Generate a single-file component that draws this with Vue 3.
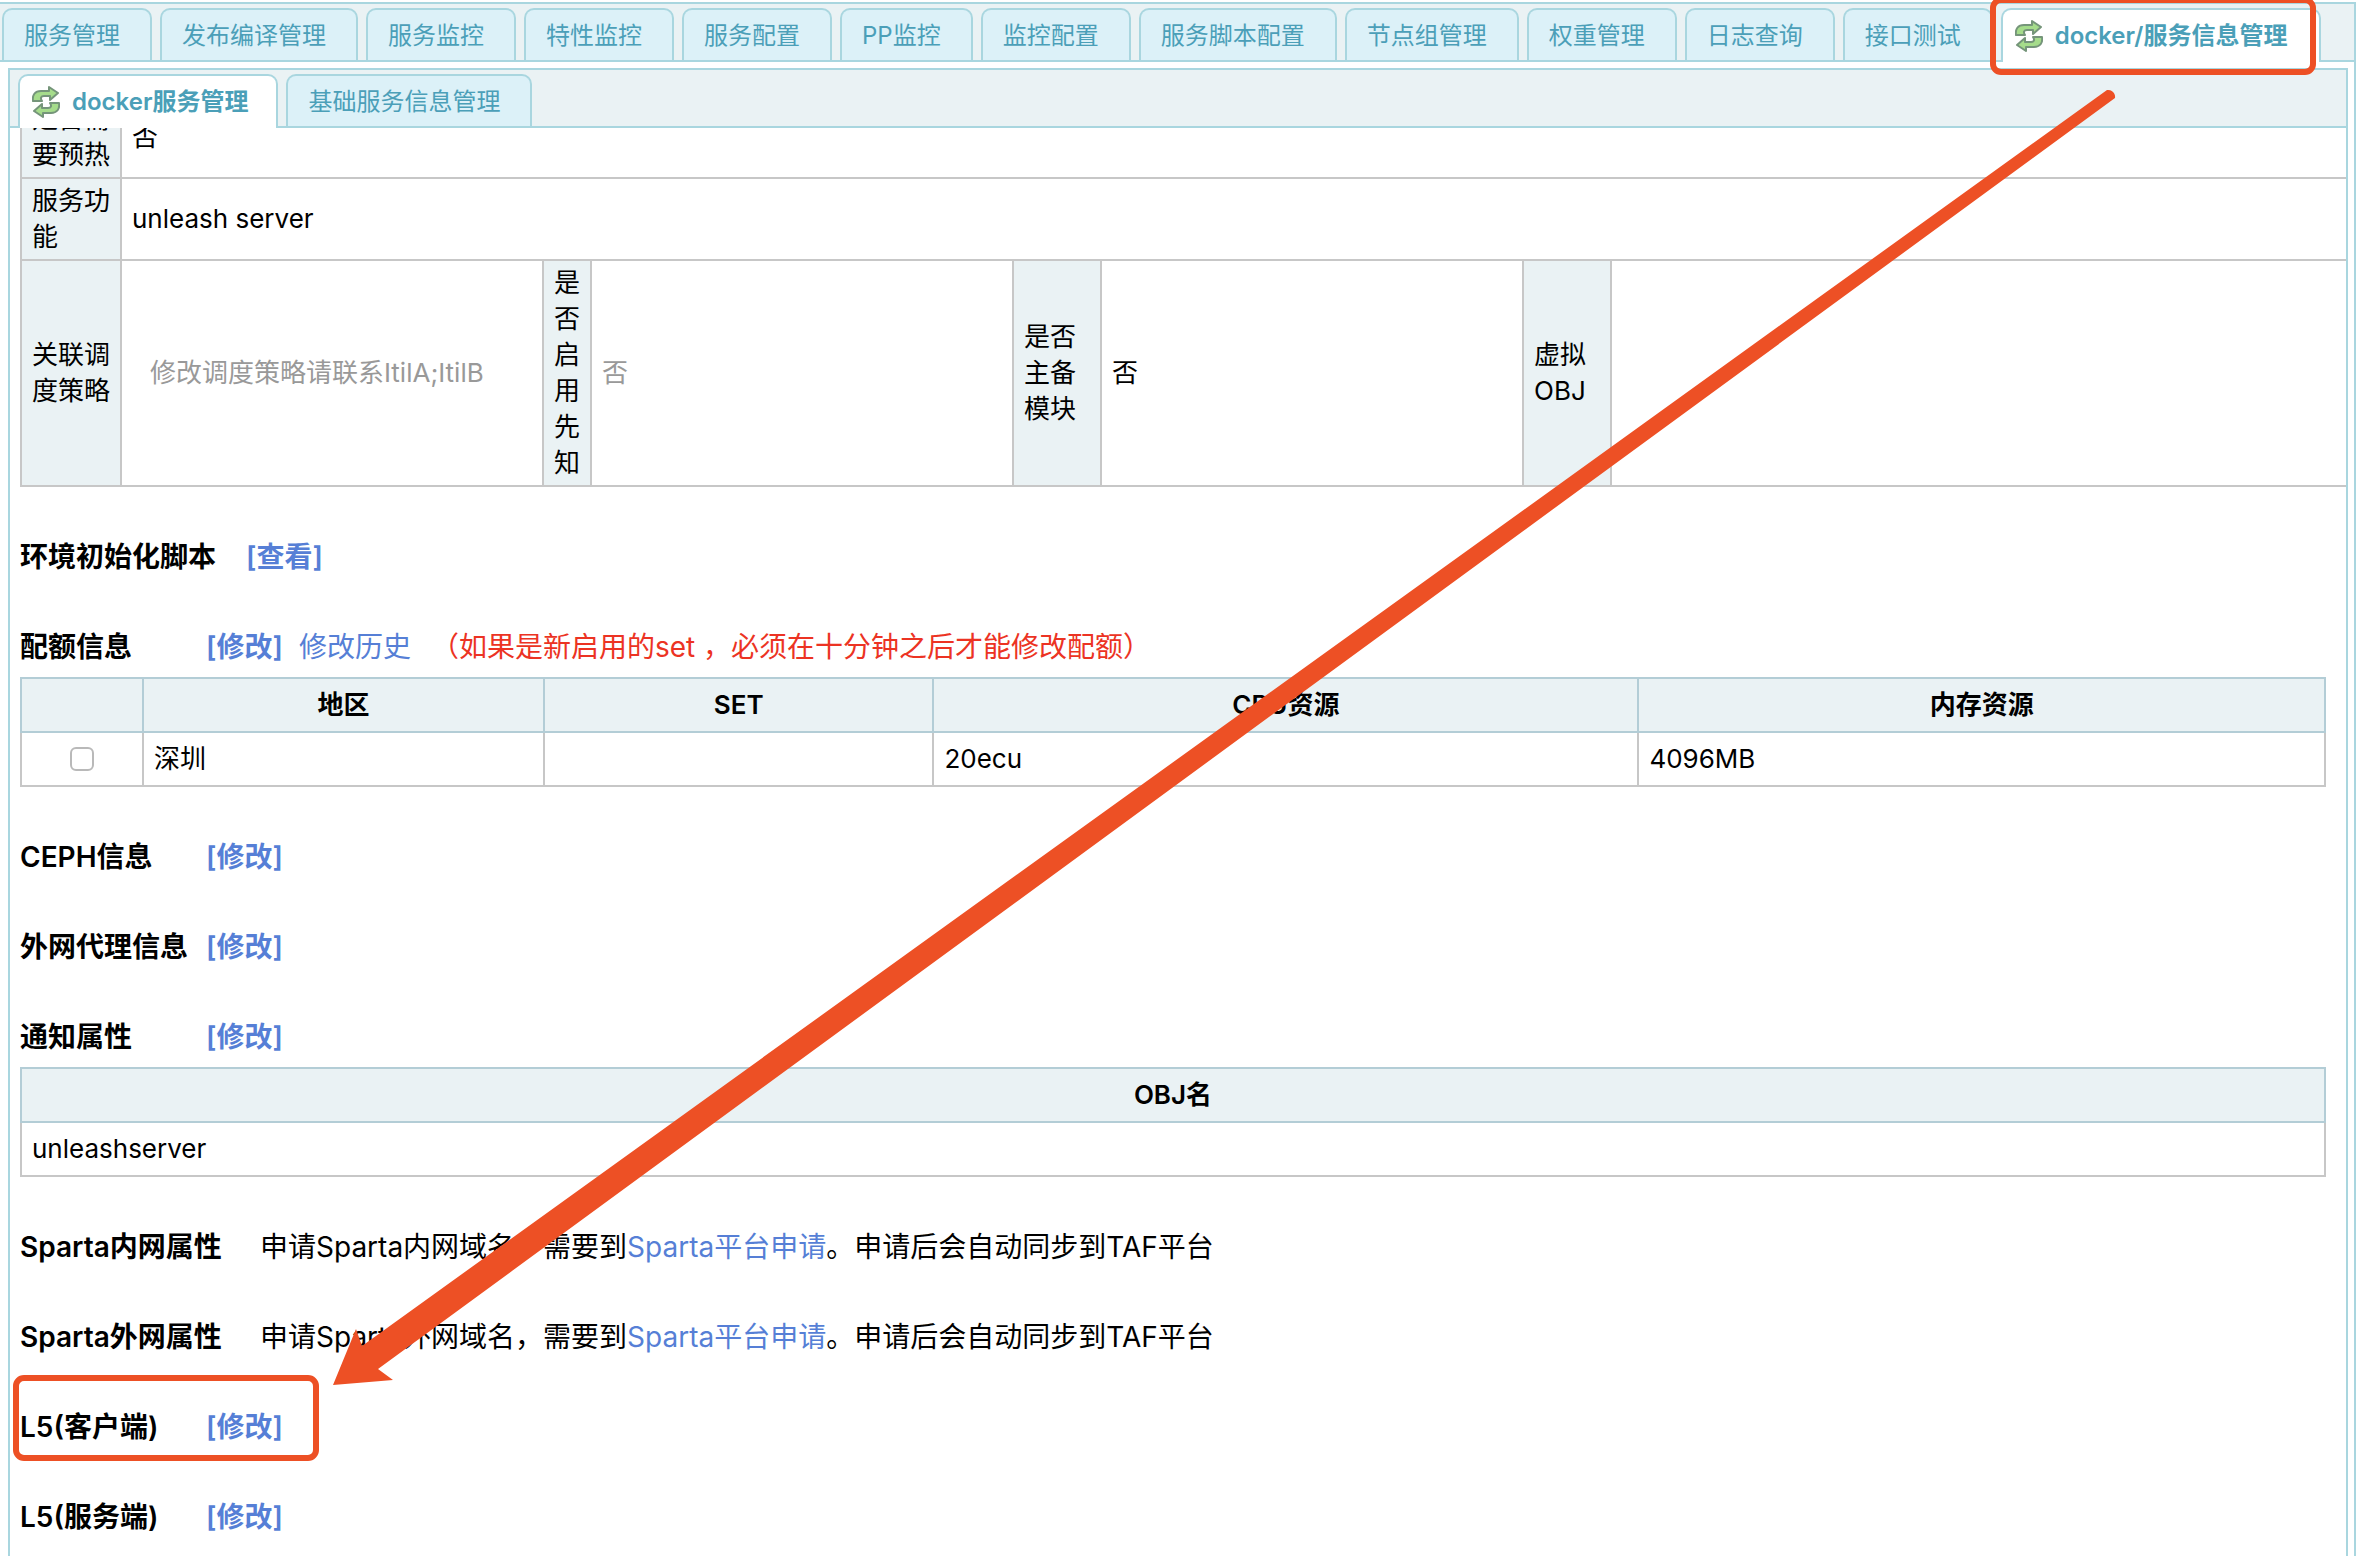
<script setup>
import { ref } from 'vue'

const mainTabs = [
  '服务管理', '发布编译管理', '服务监控', '特性监控', '服务配置', 'PP监控', '监控配置',
  '服务脚本配置', '节点组管理', '权重管理', '日志查询', '接口测试', 'docker/服务信息管理',
]
const subTabs = ['docker服务管理', '基础服务信息管理']
const activeMain = ref(12)
const activeSub = ref(0)
const quotaChecked = ref(false)
</script>

<template>
  <div class="page">
    <div class="shell">
      <nav class="bar" role="tablist">
        <button
          v-for="(name, i) in mainTabs"
          :key="name"
          type="button"
          role="tab"
          class="tab"
          :class="{ active: i === activeMain }"
          :aria-selected="i === activeMain"
          @click="activeMain = i"
        >
          <svg v-if="i === activeMain" class="refresh" viewBox="0 0 28 32" aria-hidden="true">
            <g v-for="turn in [0, 180]" :key="turn" :transform="`rotate(${turn} 14 16)`">
              <path d="M1 15C0 9 3 5 9 5H17V1L26 7L18 14V10H12C9 10 8 12 10 15Z" />
            </g>
          </svg>
          <span>{{ name }}</span>
        </button>
      </nav>

      <div class="body">
        <div class="panel">
          <nav class="bar sub" role="tablist">
            <button
              v-for="(name, i) in subTabs"
              :key="name"
              type="button"
              role="tab"
              class="tab"
              :class="{ active: i === activeSub }"
              :aria-selected="i === activeSub"
              @click="activeSub = i"
            >
              <svg v-if="i === activeSub" class="refresh" viewBox="0 0 28 32" aria-hidden="true">
                <g v-for="turn in [0, 180]" :key="turn" :transform="`rotate(${turn} 14 16)`">
                  <path d="M1 15C0 9 3 5 9 5H17V1L26 7L18 14V10H12C9 10 8 12 10 15Z" />
                </g>
              </svg>
              <span>{{ name }}</span>
            </button>
          </nav>

          <main class="content">
            <table class="info">
              <colgroup>
                <col class="c-label" /><col class="c-value" /><col class="c-thin" /><col class="c-value" />
                <col class="c-mid" /><col class="c-value" /><col class="c-mid" /><col />
              </colgroup>
              <tbody>
                <tr>
                  <th scope="row">是否需要预热</th>
                  <td colspan="7">否</td>
                </tr>
                <tr>
                  <th scope="row">服务功能</th>
                  <td colspan="7">unleash server</td>
                </tr>
                <tr>
                  <th scope="row">关联调度策略</th>
                  <td class="muted indent">修改调度策略请联系ItilA;ItilB</td>
                  <th scope="row">是否启用先知</th>
                  <td class="muted">否</td>
                  <th scope="row">是否主备模块</th>
                  <td>否</td>
                  <th scope="row">虚拟OBJ</th>
                  <td></td>
                </tr>
              </tbody>
            </table>

            <section>
              <div class="line">
                <h2 class="mid">环境初始化脚本</h2>
                <a href="#" class="act">[查看]</a>
              </div>
            </section>

            <section>
              <div class="line">
                <h2>配额信息</h2>
                <a href="#" class="act">[修改]</a>
                <a href="#" class="history">修改历史</a>
                <span class="warn">（如果是新启用的set ，必须在十分钟之后才能修改配额）</span>
              </div>
              <table class="grid">
                <colgroup>
                  <col class="q-pick" /><col class="q-area" /><col class="q-set" /><col class="q-cpu" /><col />
                </colgroup>
                <thead>
                  <tr><th></th><th>地区</th><th>SET</th><th>CPU资源</th><th>内存资源</th></tr>
                </thead>
                <tbody>
                  <tr>
                    <td class="pick"><input v-model="quotaChecked" type="checkbox" aria-label="深圳" /></td>
                    <td>深圳</td>
                    <td></td>
                    <td>20ecu</td>
                    <td>4096MB</td>
                  </tr>
                </tbody>
              </table>
            </section>

            <section>
              <div class="line"><h2>CEPH信息</h2><a href="#" class="act">[修改]</a></div>
            </section>
            <section>
              <div class="line"><h2>外网代理信息</h2><a href="#" class="act">[修改]</a></div>
            </section>
            <section>
              <div class="line"><h2>通知属性</h2><a href="#" class="act">[修改]</a></div>
              <table class="grid">
                <thead><tr><th>OBJ名</th></tr></thead>
                <tbody><tr><td>unleashserver</td></tr></tbody>
              </table>
            </section>

            <section v-for="net in ['内网', '外网']" :key="net">
              <div class="line">
                <h2 class="wide">Sparta{{ net }}属性</h2>
                <p>申请Sparta{{ net }}域名，需要到<a href="#">Sparta平台申请</a>。申请后会自动同步到TAF平台</p>
              </div>
            </section>

            <section v-for="side in ['客户端', '服务端']" :key="side">
              <div class="line"><h2>L5({{ side }})</h2><a href="#" class="act">[修改]</a></div>
            </section>
          </main>
        </div>
      </div>
    </div>

    <svg class="marks" viewBox="0 0 2362 1556" aria-hidden="true">
      <rect x="1993" y="0" width="320" height="72" rx="8" />
      <rect x="16" y="1378" width="300" height="80" rx="8" />
      <path d="M362 1346L2107 90A7 7 0 0 1 2115 98L378 1369L393 1380L333 1385L356 1329Z" />
    </svg>
  </div>
</template>

<style>
body {
  margin: 0;
  background: #fff;
}
</style>

<style scoped>
.page {
  position: relative;
  min-height: 100vh;
  overflow: hidden;
  display: flex;
  flex-direction: column;
  font-family: Inter, "Noto Sans CJK SC", sans-serif;
  font-size: 26px;
  line-height: 36px;
  color: #000;
}
.shell {
  flex: 1;
  display: flex;
  flex-direction: column;
  margin: 2px 6px 0 0;
  border: solid #a9d6df;
  border-width: 2px 2px 0 0;
}
.bar {
  display: flex;
  gap: 8px;
  height: 52px;
  padding: 4px 0 0 2px;
  background: #eaf2f4;
  border-bottom: 2px solid #a9d6df;
}
.bar.sub {
  padding-left: 8px;
}
.tab {
  display: flex;
  align-items: center;
  height: 52px;
  box-sizing: border-box;
  padding: 2px 30px 0 20px;
  border: 2px solid #a9d6df;
  border-bottom: 0;
  border-radius: 10px 10px 0 0;
  background: #dcf1f8;
  color: #4b9fb8;
  font: inherit;
  font-size: 24px;
  white-space: nowrap;
  cursor: pointer;
}
.tab.active {
  height: 54px;
  padding: 0 32px 0 12px;
  background: #fff;
  font-weight: 600;
}
.sub .tab.active {
  padding-right: 28px;
}
.refresh {
  width: 28px;
  height: 32px;
  margin-right: 12px;
}
.refresh path {
  fill: #a5dc8b;
  stroke: #75957a;
  stroke-width: 2;
  stroke-linejoin: round;
}
.body {
  flex: 1;
  display: flex;
  padding: 6px 6px 0 8px;
}
.panel {
  flex: 1;
  min-width: 0;
  border: 2px solid #a9d6df;
  border-bottom: 0;
}
.content {
  overflow: hidden;
  padding: 0 20px 8px 10px;
}
table {
  border-collapse: collapse;
  table-layout: fixed;
}
th,
td {
  border: 2px solid #c7c7c7;
  text-align: left;
  font-weight: 400;
}
.info {
  width: calc(100% + 40px);
  margin-top: -33px;
}
.info th,
.info td {
  padding: 4px 10px;
}
.info th {
  background: #eaf2f4;
}
.c-label {
  width: 100px;
}
.c-value {
  width: 422px;
}
.c-thin {
  width: 48px;
}
.c-mid {
  width: 88px;
}
.muted {
  color: #999;
}
.info .indent {
  padding-left: 28px;
}
section {
  margin-top: 30px;
}
table + section,
section:has(table) + section {
  margin-top: 40px;
}
.line {
  display: flex;
  align-items: center;
  height: 60px;
  font-size: 28px;
  white-space: nowrap;
}
h2 {
  margin: 0;
  min-width: 186px;
  font-size: 28px;
  font-weight: 600;
}
h2.mid {
  min-width: 226px;
}
h2.wide {
  min-width: 240px;
}
p {
  margin: 0;
}
a {
  color: #567fd6;
  text-decoration: none;
}
.act {
  font-weight: 600;
}
.history {
  margin-left: 16px;
}
.warn {
  margin-left: 20px;
  color: #ec3323;
}
.grid {
  width: 100%;
}
.grid th,
.grid td {
  padding: 8px 10px;
}
.grid th {
  background: #eaf2f4;
  border-color: #b3cdd6;
  text-align: center;
  font-weight: 600;
}
.q-pick {
  width: 5.3%;
}
.q-area {
  width: 17.4%;
}
.q-set {
  width: 16.9%;
}
.q-cpu {
  width: 30.6%;
}
.grid .pick {
  padding: 0;
}
.pick input {
  appearance: none;
  display: block;
  box-sizing: border-box;
  width: 24px;
  height: 24px;
  margin: 0 auto;
  border: 2px solid #b9b9b9;
  border-radius: 6px;
  background: #fff;
}
.pick input:checked {
  background: #567fd6;
}
.marks {
  position: absolute;
  top: 0;
  left: 0;
  width: 100%;
  pointer-events: none;
}
.marks rect {
  fill: none;
  stroke: #ed5025;
  stroke-width: 6;
}
.marks path {
  fill: #ed5025;
}
</style>
